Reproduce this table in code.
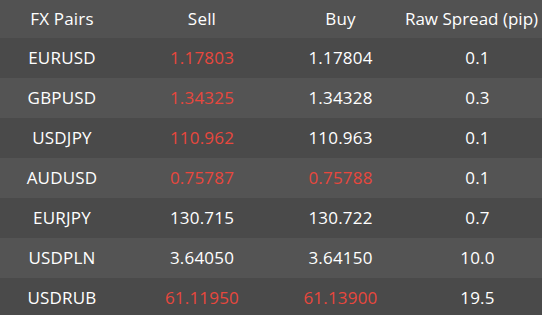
const rows = [
  { pair: "EURUSD", sell: "1.17803", buy: "1.17804", spread: "0.1", sellRed: true, buyRed: false },
  { pair: "GBPUSD", sell: "1.34325", buy: "1.34328", spread: "0.3", sellRed: true, buyRed: false },
  { pair: "USDJPY", sell: "110.962", buy: "110.963", spread: "0.1", sellRed: true, buyRed: false },
  { pair: "AUDUSD", sell: "0.75787", buy: "0.75788", spread: "0.1", sellRed: true, buyRed: true },
  { pair: "EURJPY", sell: "130.715", buy: "130.722", spread: "0.7", sellRed: false, buyRed: false },
  { pair: "USDPLN", sell: "3.64050", buy: "3.64150", spread: "10.0", sellRed: false, buyRed: false },
  { pair: "USDRUB", sell: "61.11950", buy: "61.13900", spread: "19.5", sellRed: true, buyRed: true },
];

const cols = "grid grid-cols-[124px_156px_121px_141px] items-center";

export default function App() {
  return (
    <div
      className="w-[542px] h-[315px] overflow-hidden bg-[#4b4b4b] text-[17px] text-white tracking-[0.2px]"
      style={{ fontFamily: '"Open Sans", "Noto Sans", sans-serif' }}
    >
      <div className={`${cols} h-[38px] bg-[#525252]`}>
        <div className="text-center">FX Pairs</div>
        <div className="text-center">Sell</div>
        <div className="text-center">Buy</div>
        <div className="text-center whitespace-nowrap tracking-normal">Raw Spread (pip)</div>
      </div>
      {rows.map((r, i) => (
        <div
          key={r.pair}
          className={`${cols} h-[40px] ${i % 2 === 0 ? "bg-[#4a4a4a]" : "bg-[#545454]"}`}
        >
          <div className="text-center">{r.pair}</div>
          <div className={`text-center ${r.sellRed ? "text-[#e8473d]" : ""}`}>{r.sell}</div>
          <div className={`text-center ${r.buyRed ? "text-[#e8473d]" : ""}`}>{r.buy}</div>
          <div className="text-center pl-[12px]">{r.spread}</div>
        </div>
      ))}
    </div>
  );
}
